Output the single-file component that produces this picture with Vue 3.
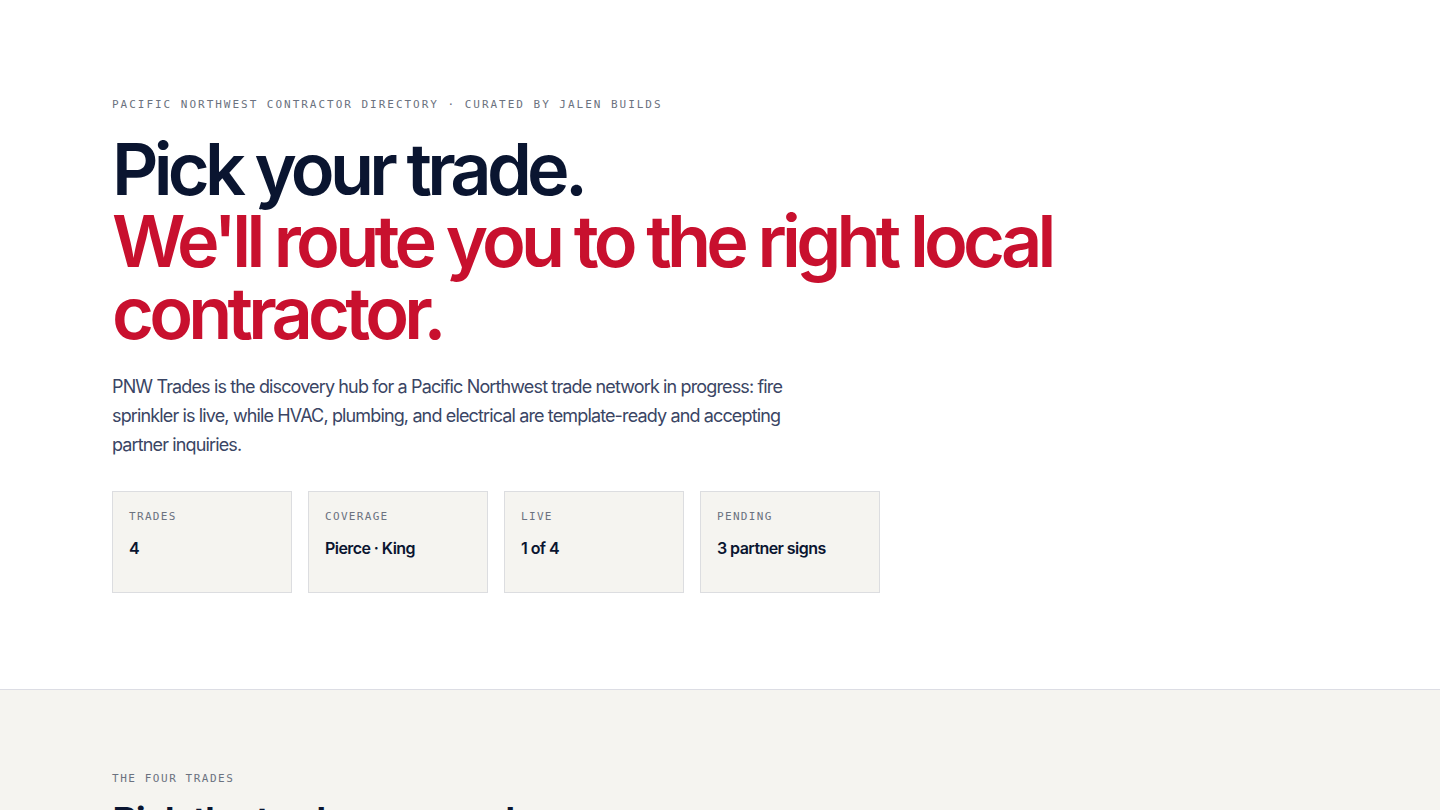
<template>
  <main class="page">
    <section class="hero">
      <div class="container">
        <p class="eyebrow">Pacific Northwest contractor directory · Curated by Jalen Builds</p>
        <h1 class="hero-title">
          Pick your trade.<br>
          <span class="accent">We'll route you to the right local contractor.</span>
        </h1>
        <p class="lede">
          PNW Trades is the discovery hub for a Pacific Northwest trade network in progress: fire
          sprinkler is live, while HVAC, plumbing, and electrical are template-ready and accepting
          partner inquiries.
        </p>
        <dl class="stats">
          <div v-for="stat in stats" :key="stat.label" class="stat">
            <dt>{{ stat.label }}</dt>
            <dd>{{ stat.value }}</dd>
          </div>
        </dl>
      </div>
    </section>

    <section class="trades">
      <div class="container">
        <p class="eyebrow eyebrow-section">The four trades</p>
        <h2 class="section-title">Pick the trade you need.</h2>
      </div>
    </section>
  </main>
</template>

<script setup>
const stats = [
  { label: 'Trades', value: '4' },
  { label: 'Coverage', value: 'Pierce · King' },
  { label: 'Live', value: '1 of 4' },
  { label: 'Pending', value: '3 partner signs' },
];
</script>

<style>
body {
  margin: 0;
  background-color: #ffffff;
}
</style>

<style scoped>
.page {
  color: #0a1530;
  font-family: Inter, "Liberation Sans", sans-serif;
}
.container {
  max-width: 1216px;
  margin: 0 auto;
  padding: 0 32px;
}
.hero {
  padding: 96px 0;
  border-bottom: 1px solid #dcdde4;
}
.eyebrow {
  margin: 0 0 20px;
  color: #6b7280;
  font-family: "DejaVu Sans Mono", "Liberation Mono", monospace;
  font-size: 11px;
  line-height: 17px;
  letter-spacing: 0.18em;
  text-transform: uppercase;
}
.hero-title {
  max-width: 960px;
  margin: 0 0 23px;
  font-size: 72px;
  font-weight: 600;
  line-height: 72px;
  letter-spacing: -0.066em;
}
.accent {
  color: #c8102e;
}
.lede {
  max-width: 680px;
  margin: 0 0 32px;
  color: #3a4564;
  font-size: 18px;
  font-weight: 400;
  line-height: 29px;
  letter-spacing: -0.048em;
}
.stats {
  display: grid;
  grid-template-columns: repeat(4, 1fr);
  gap: 16px;
  max-width: 768px;
  margin: 0;
}
.stat {
  padding: 16px 16px 32px;
  border: 1px solid #dcdde0;
  background-color: #f5f4f0;
}
.stat dt {
  margin-bottom: 11px;
  color: #6b7280;
  font-family: "DejaVu Sans Mono", "Liberation Mono", monospace;
  font-size: 11px;
  line-height: 17px;
  letter-spacing: 0.12em;
  text-transform: uppercase;
}
.stat dd {
  margin: 0;
  font-size: 16px;
  font-weight: 600;
  line-height: 24px;
  letter-spacing: -0.035em;
}
.trades {
  padding: 80px 0;
  background-color: #f5f4f0;
}
.eyebrow-section {
  margin-bottom: 12px;
  letter-spacing: 0.14em;
}
.section-title {
  margin: 0;
  font-size: 40px;
  font-weight: 600;
  line-height: 46px;
  letter-spacing: -0.058em;
}
@media (max-width: 720px) {
  .hero-title {
    font-size: 44px;
    line-height: 48px;
  }
  .stats {
    grid-template-columns: repeat(2, 1fr);
  }
}
</style>
